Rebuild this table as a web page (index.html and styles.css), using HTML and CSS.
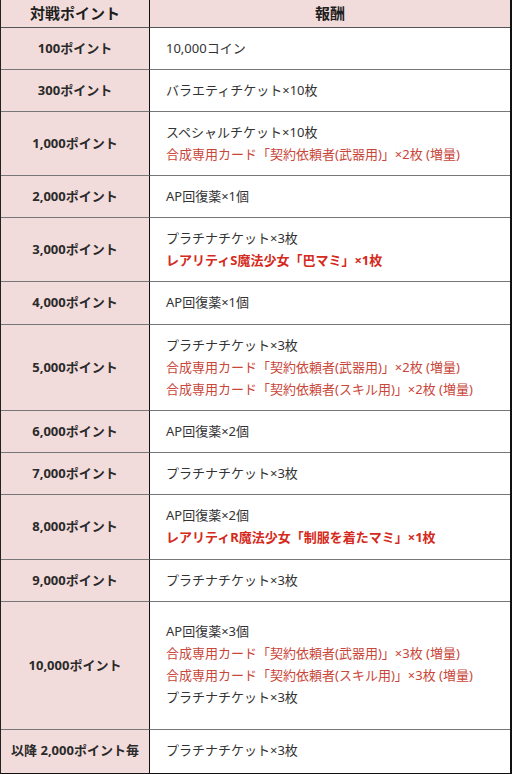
FILE: index.html
```html
<!DOCTYPE html>
<html lang="ja">
<head>
<meta charset="utf-8">
<link rel="stylesheet" href="styles.css">
</head>
<body>
<table class="rewards">
  <thead>
    <tr><th class="col-pt">対戦ポイント</th><th class="col-rw">報酬</th></tr>
  </thead>
  <tbody>
    <tr><td class="pt">100ポイント</td><td class="rw">10,000コイン</td></tr>
    <tr><td class="pt">300ポイント</td><td class="rw">バラエティチケット×10枚</td></tr>
    <tr><td class="pt">1,000ポイント</td><td class="rw">スペシャルチケット×10枚<br><span class="red">合成専用カード「契約依頼者(武器用)」×2枚 (増量)</span></td></tr>
    <tr><td class="pt">2,000ポイント</td><td class="rw">AP回復薬×1個</td></tr>
    <tr><td class="pt">3,000ポイント</td><td class="rw">プラチナチケット×3枚<br><span class="red-b">レアリティS魔法少女「巴マミ」×1枚</span></td></tr>
    <tr class="roomy"><td class="pt">4,000ポイント</td><td class="rw">AP回復薬×1個</td></tr>
    <tr><td class="pt">5,000ポイント</td><td class="rw">プラチナチケット×3枚<br><span class="red">合成専用カード「契約依頼者(武器用)」×2枚 (増量)</span><br><span class="red">合成専用カード「契約依頼者(スキル用)」×2枚 (増量)</span></td></tr>
    <tr><td class="pt">6,000ポイント</td><td class="rw">AP回復薬×2個</td></tr>
    <tr><td class="pt">7,000ポイント</td><td class="rw">プラチナチケット×3枚</td></tr>
    <tr class="roomy"><td class="pt">8,000ポイント</td><td class="rw">AP回復薬×2個<br><span class="red-b">レアリティR魔法少女「制服を着たマミ」×1枚</span></td></tr>
    <tr><td class="pt">9,000ポイント</td><td class="rw">プラチナチケット×3枚</td></tr>
    <tr><td class="pt">10,000ポイント</td><td class="rw tall">AP回復薬×3個<br><span class="red">合成専用カード「契約依頼者(武器用)」×3枚 (増量)</span><br><span class="red">合成専用カード「契約依頼者(スキル用)」×3枚 (増量)</span><br>プラチナチケット×3枚</td></tr>
    <tr class="last"><td class="pt">以降 2,000ポイント毎</td><td class="rw">プラチナチケット×3枚</td></tr>
  </tbody>
</table>
</body>
</html>
```

FILE: styles.css
```css
html, body {
  margin: 0;
  padding: 0;
  background: #ffffff;
}

.rewards {
  width: 512px;
  border-collapse: separate;
  border-spacing: 0;
  table-layout: fixed;
  font-family: "Noto Sans", "Noto Sans CJK JP", sans-serif;
  font-size: 13px;
  color: #333333;
  border-left: 1px solid #222;
  border-right: 2px solid #111;
  border-bottom: 2px solid #111;
}

.col-pt {
  width: 148px;
}

.rewards th {
  background: #f2dcdb;
  font-size: 15px;
  font-weight: bold;
  color: #1e1e1e;
  line-height: 20px;
  padding: 3px 0 4px;
  text-align: center;
  border-bottom: 1px solid #555;
}

.rewards th.col-pt {
  border-right: 1px solid #111;
}

.rewards td {
  line-height: 22px;
  padding: 9px 0 10px;
  border-bottom: 1px solid #777;
  vertical-align: middle;
}

.rewards tr.roomy td {
  padding-bottom: 11px;
}

.rewards tr.last td {
  border-bottom: none;
  padding-bottom: 12px;
}

.pt {
  background: #f2dcdb;
  font-weight: bold;
  color: #2a2a2a;
  text-align: center;
  border-right: 1px solid #111;
  white-space: nowrap;
}

.rw {
  padding-left: 16px !important;
  text-align: left;
  white-space: nowrap;
}

.rewards td.rw.tall {
  padding-top: 18px;
  padding-bottom: 21px;
  vertical-align: top;
}

.red {
  color: #c9463a;
}

.red-b {
  color: #d42a20;
  font-weight: bold;
}
```
